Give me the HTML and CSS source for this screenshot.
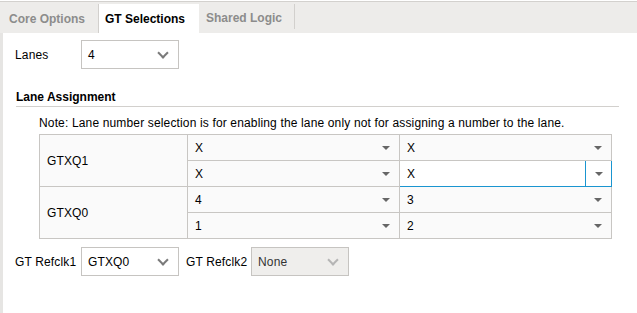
FILE: index.html
```html
<!DOCTYPE html>
<html lang="en">
<head>
    <meta charset="UTF-8">
    <title>GT Selections</title>
    <link rel="stylesheet" href="styles.css">
</head>
<body>
    <div class="tabs">
        <div class="tab tab-first">Core Options</div>
        <div class="tab active">GT Selections</div>
        <div class="tab tab-last">Shared Logic</div>
    </div>
    <div class="content">
        <div class="field-row">
            <span class="label">Lanes</span>
            <div class="select"><span>4</span><span class="chevron"></span></div>
        </div>

        <div class="section">
            <h3 class="section-title">Lane Assignment</h3>
            <p class="note">Note: Lane number selection is for enabling the lane only not for assigning a number to the lane.</p>
            <table class="lanes">
                <tr>
                    <td class="quad" rowspan="2">GTXQ1</td>
                    <td><div class="cell"><span>X</span><span class="arrow"></span></div></td>
                    <td><div class="cell"><span>X</span><span class="arrow"></span></div></td>
                </tr>
                <tr>
                    <td><div class="cell"><span>X</span><span class="arrow"></span></div></td>
                    <td class="editing"><div class="cell"><span>X</span><span class="arrow-box"><span class="arrow"></span></span></div></td>
                </tr>
                <tr>
                    <td class="quad" rowspan="2">GTXQ0</td>
                    <td><div class="cell"><span>4</span><span class="arrow"></span></div></td>
                    <td><div class="cell"><span>3</span><span class="arrow"></span></div></td>
                </tr>
                <tr>
                    <td><div class="cell"><span>1</span><span class="arrow"></span></div></td>
                    <td><div class="cell"><span>2</span><span class="arrow"></span></div></td>
                </tr>
            </table>
        </div>

        <div class="field-row refclk">
            <span class="label">GT Refclk1</span>
            <div class="select"><span>GTXQ0</span><span class="chevron"></span></div>
            <span class="label label-short">GT Refclk2</span>
            <div class="select disabled"><span>None</span><span class="chevron"></span></div>
        </div>
    </div>
</body>
</html>
```

FILE: styles.css
```css
body {
    margin: 0;
    background: white;
    font-family: "Liberation Sans", Arial, sans-serif;
    font-size: 12px;
    line-height: 14px;
    letter-spacing: 0.15px;
    color: #000;
}
.tabs {
    display: flex;
    height: 31px;
    margin-top: 1px;
    background: #edecea;
    border-top: 1px solid #d3d1ce;
}
.tab {
    display: flex;
    align-items: center;
    padding-top: 2px;
    font-weight: bold;
    color: #8c8c8c;
    letter-spacing: 0;
}
.tab-first {
    width: 89px;
    padding-left: 9px;
}
.tab.active {
    margin-top: 2px;
    padding-top: 0;
    width: 94px;
    padding-left: 6px;
    background: white;
    color: #000;
    border-left: 1px solid #d2d0cd;
}
.tab-last {
    margin: 2px 0 4px;
    padding-top: 3px;
    width: 88px;
    padding-left: 7px;
    border-right: 1px solid #d2d0cd;
}
.content {
    border-left: 3px solid #e6e5e3;
    padding: 7px 0 40px 12px;
}
.field-row {
    display: flex;
    align-items: center;
}
.label {
    width: 66px;
}
.label-short {
    width: 65px;
    margin-left: 7px;
}
.select {
    box-sizing: border-box;
    width: 98px;
    height: 29px;
    border: 1px solid #c6c4c1;
    display: flex;
    align-items: center;
    justify-content: space-between;
    padding: 0 11px 0 6px;
    background: white;
}
.select.disabled {
    background: #efeeec;
    color: #333;
}
.chevron {
    width: 6px;
    height: 6px;
    border-right: 2px solid #7a7a7a;
    border-bottom: 2px solid #7a7a7a;
    transform: rotate(45deg);
    margin-top: -4px;
}
.disabled .chevron {
    border-color: #b5b5b5;
}
.section {
    width: 603px;
    margin: 21px 0 8px 1px;
}
.section-title {
    margin: 0;
    font-size: 12px;
    font-weight: bold;
    letter-spacing: 0;
    padding-bottom: 2px;
    border-bottom: 1px solid #d2d0cd;
}
.note {
    margin: 9px 0 4px 23px;
}
.lanes {
    margin-left: 23px;
    border-collapse: collapse;
    background: #fafafa;
}
.lanes td {
    border: 1px solid #c8c6c3;
    height: 25px;
    padding: 0;
    width: 211px;
}
.lanes td.quad {
    width: 140px;
    padding-left: 7px;
}
.cell {
    display: flex;
    align-items: center;
    justify-content: space-between;
    height: 25px;
    padding: 0 9px 0 7px;
}
.arrow {
    width: 0;
    height: 0;
    border-left: 4px solid transparent;
    border-right: 4px solid transparent;
    border-top: 4px solid #666;
}
.lanes td.editing {
    border: 1px solid #1a95d0;
    background: white;
}
.editing .cell {
    padding-right: 0;
}
.arrow-box {
    width: 25px;
    height: 25px;
    border-left: 1px solid #1a95d0;
    display: flex;
    align-items: center;
    justify-content: center;
}
```
